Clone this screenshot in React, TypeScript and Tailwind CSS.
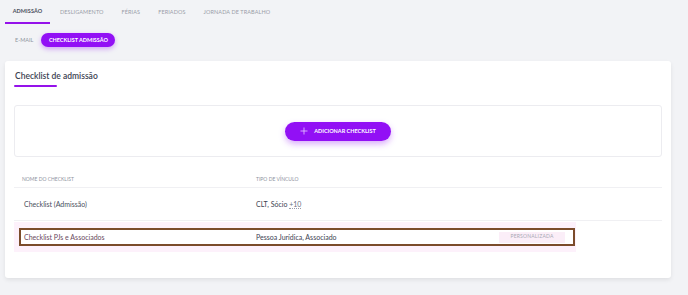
const tabs = ['ADMISSÃO', 'DESLIGAMENTO', 'FÉRIAS', 'FERIADOS', 'JORNADA DE TRABALHO'];

export default function App() {
  return (
    <div
      className="w-[688px] h-[295px] bg-[#f2f3f6] overflow-hidden"
      style={{ fontFamily: 'Lato, "Noto Sans", sans-serif' }}
    >
      {/* Top tabs */}
      <div className="flex items-end h-[24px] pl-[5px] gap-[18px]">
        {tabs.map((t, i) => (
          <div
            key={t}
            className={
              i === 0
                ? 'h-[24px] w-[45px] flex items-center justify-center border-b-2 border-[#9512ea] text-[5.5px] font-bold text-[#4b4f5c] tracking-[0.1px]'
                : 'h-[24px] flex items-center text-[5.5px] text-[#9a9da8] tracking-[0.1px]'
            }
            style={i === 1 ? { marginLeft: -8 } : undefined}
          >
            {t}
          </div>
        ))}
      </div>

      {/* Sub pills */}
      <div className="flex items-center h-[14px] mt-[9px] pl-[15px] gap-[8px]">
        <span className="text-[5.5px] text-[#8f93a0]">E-MAIL</span>
        <span className="h-[14px] w-[74px] rounded-full bg-[#9210f5] text-white text-[5.5px] font-bold flex items-center justify-center shadow-[0_2px_5px_rgba(146,16,245,0.35)]">
          CHECKLIST ADMISSÃO
        </span>
      </div>

      {/* Card */}
      <div className="mt-[14px] ml-[5px] w-[666px] h-[217px] bg-white rounded-[3px] shadow-[0_2px_4px_rgba(0,0,0,0.08)] px-[9px] pt-[10px]">
        <div className="pl-[1px] text-[8.5px] font-semibold text-[#3c4252] leading-[10px]">
          Checklist de admissão
        </div>
        <div className="mt-[4px] w-[43px] h-[2px] bg-[#9512ea] rounded-full" />

        <div className="mt-[18px] h-[52px] border border-[#ececf0] rounded-[3px] flex items-center justify-center">
          <button className="h-[19px] w-[106px] rounded-full bg-[#9210f5] text-white text-[5.5px] font-bold flex items-center justify-center gap-[6px] shadow-[0_3px_6px_rgba(146,16,245,0.35)]">
            <svg width="8" height="8" viewBox="0 0 8 8" fill="none" stroke="#e6c9ff" strokeWidth="0.8">
              <path d="M4 0.5V7.5M0.5 4H7.5" />
            </svg>
            ADICIONAR CHECKLIST
          </button>
        </div>

        {/* Table */}
        <div className="mt-[15px]">
          <div className="flex items-center h-[16px] border-b border-[#f0f0f3] text-[5px] text-[#8f93a0]">
            <div className="w-[242px] pl-[8px]">NOME DO CHECKLIST</div>
            <div>TIPO DE VÍNCULO</div>
          </div>
          <div className="flex items-center h-[33px] border-b border-[#f0f0f3] text-[7px] text-[#4a4f5c]">
            <div className="w-[242px] pl-[10px]">Checklist (Admissão)</div>
            <div className="text-[#3c4252]">
              CLT, Sócio{' '}
              <span className="text-[#6a6f80] border-b border-dotted border-[#9a9da8]">+10</span>
            </div>
          </div>
          <div className="mt-[1px] w-[562px] h-[30px] bg-[#fdf1fb] flex items-center pl-[5px]">
            <div className="w-[556px] h-[18px] border-2 border-[#7b4c2b] bg-white flex items-center text-[7px]">
              <div className="w-[235px] pl-[3px] text-[#6b4a5e]">Checklist PJs e Associados</div>
              <div className="flex-1 text-[#3c4252]">Pessoa Jurídica, Associado</div>
              <div className="mr-[8px] h-[11px] w-[66px] bg-[#fbeef8] text-[#a8a9b4] text-[5px] flex items-center justify-center tracking-[0.2px]">
                PERSONALIZADA
              </div>
            </div>
          </div>
        </div>
      </div>
    </div>
  );
}
